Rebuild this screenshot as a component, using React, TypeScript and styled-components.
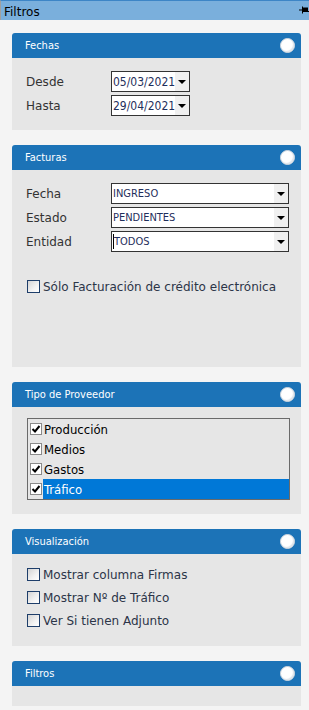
import styled, { createGlobalStyle } from 'styled-components';

const GlobalStyle = createGlobalStyle`
  html, body {
    margin: 0;
    padding: 0;
    background: #f4f4f4;
  }
  body {
    font-family: "DejaVu Sans Condensed", "DejaVu Sans", sans-serif;
    font-size: 12px;
    color: #333;
  }
`;

type Option = { label: string; checked: boolean; selected?: boolean };

const proveedores: Option[] = [
  { label: 'Producción', checked: true },
  { label: 'Medios', checked: true },
  { label: 'Gastos', checked: true },
  { label: 'Tráfico', checked: true, selected: true },
];

export default function App() {
  return (
    <>
      <GlobalStyle />
      <Page>
        <TopBar>
          <TopTitle>Filtros</TopTitle>
          <PinIcon />
        </TopBar>
        <Content>
          <Panel>
            <PanelHeader title="Fechas" />
            <PanelBody $height={72} $padTop={13}>
              <FieldRow>
                <Label>Desde</Label>
                <Combo $width={79}>
                  <ComboText $date>05/03/2021</ComboText>
                  <DropButton><Arrow /></DropButton>
                </Combo>
              </FieldRow>
              <FieldRow>
                <Label>Hasta</Label>
                <Combo $width={79}>
                  <ComboText $date>29/04/2021</ComboText>
                  <DropButton><Arrow /></DropButton>
                </Combo>
              </FieldRow>
            </PanelBody>
          </Panel>

          <Panel>
            <PanelHeader title="Facturas" />
            <PanelBody $height={197} $padTop={13}>
              <FieldRow>
                <Label>Fecha</Label>
                <Combo $width={178}>
                  <ComboText>INGRESO</ComboText>
                  <DropButton><Arrow /></DropButton>
                </Combo>
              </FieldRow>
              <FieldRow>
                <Label>Estado</Label>
                <Combo $width={178}>
                  <ComboText>PENDIENTES</ComboText>
                  <DropButton><Arrow /></DropButton>
                </Combo>
              </FieldRow>
              <FieldRow>
                <Label>Entidad</Label>
                <Combo $width={178}>
                  <ComboText><Caret />TODOS</ComboText>
                  <DropButton><Arrow /></DropButton>
                </Combo>
              </FieldRow>
              <CheckGroup $top={25}>
                <CheckRow>
                  <Box />
                  <CheckLabel>Sólo Facturación de crédito electrónica</CheckLabel>
                </CheckRow>
              </CheckGroup>
            </PanelBody>
          </Panel>

          <Panel>
            <PanelHeader title="Tipo de Proveedor" />
            <PanelBody $height={107} $padTop={11}>
              <ListBox>
                {proveedores.map((p) => (
                  <ListItem key={p.label}>
                    <ListCheck>
                      {p.checked && (
                        <svg width="10" height="10" viewBox="0 0 10 10">
                          <path d="M1.5 5 L4 7.5 L8.5 2" fill="none" stroke="#000" strokeWidth="2" />
                        </svg>
                      )}
                    </ListCheck>
                    <ItemText $selected={p.selected}>{p.label}</ItemText>
                  </ListItem>
                ))}
              </ListBox>
            </PanelBody>
          </Panel>

          <Panel>
            <PanelHeader title="Visualización" />
            <PanelBody $height={92} $padTop={14}>
              <CheckGroup $top={0}>
                <CheckRow>
                  <Box />
                  <CheckLabel>Mostrar columna Firmas</CheckLabel>
                </CheckRow>
                <CheckRow>
                  <Box />
                  <CheckLabel>Mostrar Nº de Tráfico</CheckLabel>
                </CheckRow>
                <CheckRow>
                  <Box />
                  <CheckLabel>Ver Si tienen Adjunto</CheckLabel>
                </CheckRow>
              </CheckGroup>
            </PanelBody>
          </Panel>

          <Panel>
            <PanelHeader title="Filtros" />
            <PanelBody $height={20} $padTop={0} />
          </Panel>
        </Content>
      </Page>
    </>
  );
}

function PanelHeader({ title }: { title: string }) {
  return (
    <HeaderBar>
      <HeaderTitle>{title}</HeaderTitle>
      <CollapseButton />
    </HeaderBar>
  );
}

function PinIcon() {
  return (
    <PinWrap width="10" height="8" viewBox="0 0 10 8">
      <path d="M0 4 H3" stroke="#000" strokeWidth="1" />
      <path d="M3.5 0.5 V7.5" stroke="#000" strokeWidth="1" />
      <rect x="4" y="1.5" width="5" height="4" fill="#000" />
      <path d="M4 5.5 H10" stroke="#000" strokeWidth="1" />
    </PinWrap>
  );
}

const Page = styled.div`
  width: 309px;
  min-height: 710px;
  background: #f4f4f4;
`;

const TopBar = styled.div`
  box-sizing: border-box;
  height: 20px;
  border-top: 1px solid #3d85c6;
  border-left: 1px solid #a0a0a0;
  background: #7aafdc;
  display: flex;
  align-items: center;
  justify-content: space-between;
  padding-left: 3px;
`;

const TopTitle = styled.span`
  font-family: "DejaVu Sans", sans-serif;
  font-size: 12px;
  color: #000;
  padding-top: 2px;
`;

const PinWrap = styled.svg`
  margin-top: -2px;
`;

const Content = styled.div`
  padding: 13px 8px 0 12px;
  display: flex;
  flex-direction: column;
  gap: 15px;
`;

const Panel = styled.section`
  width: 289px;
`;

const HeaderBar = styled.div`
  height: 25px;
  background: #1c73b7;
  border-radius: 3px 3px 0 0;
  display: flex;
  align-items: center;
  justify-content: space-between;
  padding: 0 6px 0 13px;
`;

const HeaderTitle = styled.span`
  color: #fff;
  font-size: 11px;
`;

const CollapseButton = styled.span`
  width: 13px;
  height: 13px;
  border-radius: 50%;
  background: #fff;
  border: 1px solid #cfd6de;
  box-shadow: inset -1px -1px 1px #dde3ea;
`;

const PanelBody = styled.div<{ $height: number; $padTop: number }>`
  box-sizing: border-box;
  height: ${(p) => p.$height}px;
  background: #e6e6e6;
  padding: ${(p) => p.$padTop}px 0 0 14px;
  display: flex;
  flex-direction: column;
  gap: 3px;
`;

const FieldRow = styled.div`
  display: flex;
  align-items: center;
  height: 21px;
`;

const Label = styled.span`
  width: 85px;
  font-family: "DejaVu Sans", sans-serif;
  font-size: 12px;
  color: #333;
`;

const Combo = styled.div<{ $width: number }>`
  box-sizing: border-box;
  width: ${(p) => p.$width}px;
  height: 21px;
  border: 1px solid #333;
  background: #fff;
  display: flex;
  align-items: stretch;
`;

const ComboText = styled.span<{ $date?: boolean }>`
  flex: 1;
  display: flex;
  align-items: center;
  padding-left: 1px;
  font-size: ${(p) => (p.$date ? '12px' : '11px')};
  color: #1f2f5c;
  white-space: nowrap;
  overflow: hidden;
`;

const Caret = styled.span`
  display: inline-block;
  width: 1px;
  height: 15px;
  background: #000;
`;

const DropButton = styled.span`
  width: 14px;
  background: #f0f0f0;
  display: flex;
  align-items: center;
  justify-content: center;
`;

const Arrow = styled.span`
  width: 0;
  height: 0;
  border-left: 4px solid transparent;
  border-right: 4px solid transparent;
  border-top: 4px solid #000;
`;

const CheckGroup = styled.div<{ $top: number }>`
  margin-top: ${(p) => p.$top}px;
  margin-left: 1px;
  display: flex;
  flex-direction: column;
  gap: 10px;
`;

const CheckRow = styled.label`
  display: flex;
  align-items: center;
  gap: 3px;
  height: 13px;
`;

const Box = styled.span`
  box-sizing: border-box;
  width: 13px;
  height: 13px;
  border: 1px solid #1e3e6a;
  background: linear-gradient(135deg, #d4d4d4 0%, #f2f2f2 60%, #ffffff 100%);
`;

const CheckLabel = styled.span`
  font-family: "DejaVu Sans", sans-serif;
  font-size: 12px;
  color: #2c3548;
`;

const ListBox = styled.div`
  box-sizing: border-box;
  width: 263px;
  height: 82px;
  margin-left: 1px;
  border: 1px solid #6a6a6a;
  display: flex;
  flex-direction: column;
`;

const ListItem = styled.div`
  height: 20px;
  display: flex;
  align-items: center;
  padding-left: 2px;
`;

const ListCheck = styled.span`
  box-sizing: border-box;
  width: 12px;
  height: 12px;
  border: 1px solid #8a8a8a;
  background: #fff;
  display: flex;
  align-items: center;
  justify-content: center;
`;

const ItemText = styled.span<{ $selected?: boolean }>`
  flex: 1;
  height: 20px;
  display: flex;
  align-items: center;
  margin-left: 1px;
  padding-left: 1px;
  font-size: 13px;
  color: ${(p) => (p.$selected ? '#fff' : '#000')};
  background: ${(p) => (p.$selected ? '#0078d7' : 'transparent')};
`;
